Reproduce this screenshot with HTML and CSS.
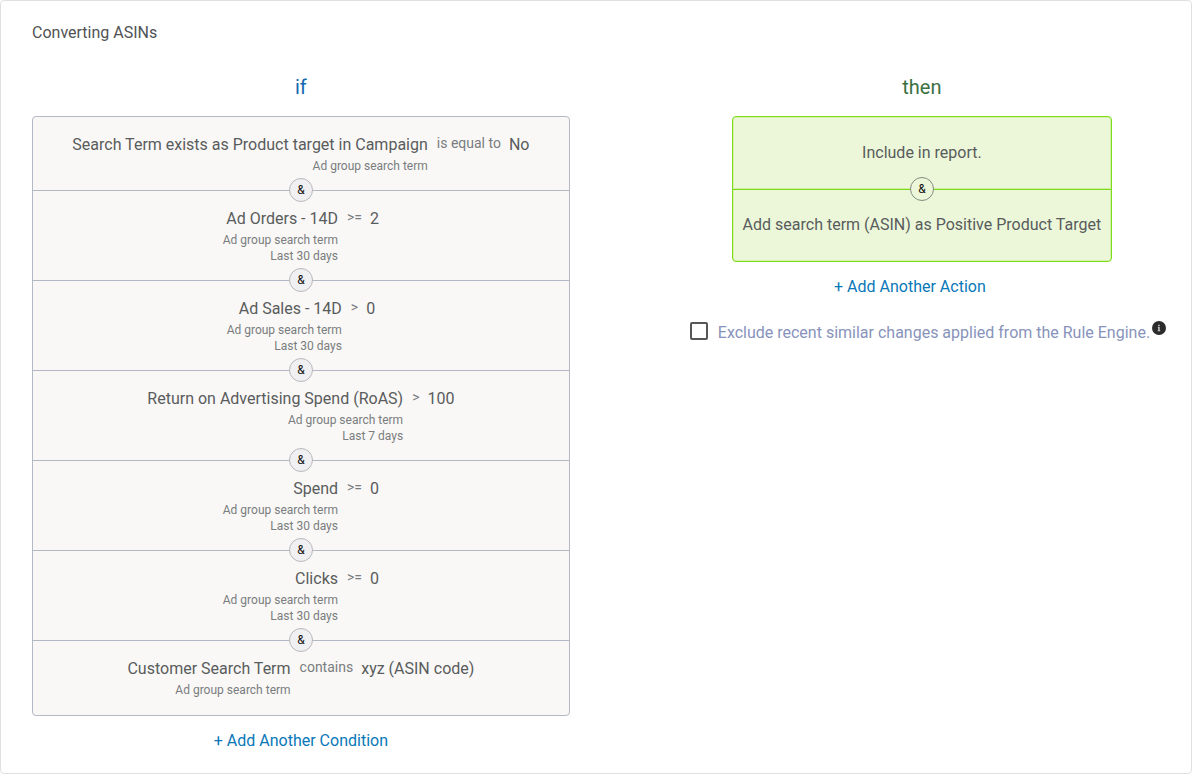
FILE: index.html
```html
<!DOCTYPE html>
<html lang="en">
<head>
<meta charset="utf-8">
<meta name="viewport" content="width=device-width, initial-scale=1">
<title>Converting ASINs</title>
<link rel="stylesheet" href="styles.css">
</head>
<body>
<main class="card">
  <h1 class="card-title">Converting ASINs</h1>
  <div class="columns">
    <section class="column">
      <h2 class="heading heading-if">if</h2>
      <ul class="box conditions">
        <li class="condition">
          <div class="subject"><span class="name">Search Term exists as Product target in Campaign</span><span class="meta">Ad group search term</span></div>
          <span class="operator">is equal to</span><span class="value">No</span>
          <span class="joiner">&amp;</span>
        </li>
        <li class="condition">
          <div class="subject"><span class="name">Ad Orders - 14D</span><span class="meta">Ad group search term</span><span class="meta">Last 30 days</span></div>
          <span class="operator">&gt;=</span><span class="value">2</span>
          <span class="joiner">&amp;</span>
        </li>
        <li class="condition">
          <div class="subject"><span class="name">Ad Sales - 14D</span><span class="meta">Ad group search term</span><span class="meta">Last 30 days</span></div>
          <span class="operator">&gt;</span><span class="value">0</span>
          <span class="joiner">&amp;</span>
        </li>
        <li class="condition">
          <div class="subject"><span class="name">Return on Advertising Spend (RoAS)</span><span class="meta">Ad group search term</span><span class="meta">Last 7 days</span></div>
          <span class="operator">&gt;</span><span class="value">100</span>
          <span class="joiner">&amp;</span>
        </li>
        <li class="condition">
          <div class="subject"><span class="name">Spend</span><span class="meta">Ad group search term</span><span class="meta">Last 30 days</span></div>
          <span class="operator">&gt;=</span><span class="value">0</span>
          <span class="joiner">&amp;</span>
        </li>
        <li class="condition">
          <div class="subject"><span class="name">Clicks</span><span class="meta">Ad group search term</span><span class="meta">Last 30 days</span></div>
          <span class="operator">&gt;=</span><span class="value">0</span>
          <span class="joiner">&amp;</span>
        </li>
        <li class="condition">
          <div class="subject"><span class="name">Customer Search Term</span><span class="meta">Ad group search term</span></div>
          <span class="operator">contains</span><span class="value">xyz (ASIN code)</span>
        </li>
      </ul>
      <button type="button" class="add">+ Add Another Condition</button>
    </section>
    <section class="column">
      <h2 class="heading heading-then">then</h2>
      <ul class="box actions">
        <li class="action">Include in report.<span class="joiner joiner-green">&amp;</span></li>
        <li class="action">Add search term (ASIN) as Positive Product Target</li>
      </ul>
      <button type="button" class="add add-action">+ Add Another Action</button>
      <div class="exclude">
        <input class="check" type="checkbox" id="exclude">
        <label class="exclude-label" for="exclude">Exclude recent similar changes applied from the Rule Engine.</label>
        <svg class="info" viewBox="0 0 14 14" aria-hidden="true"><circle cx="7" cy="7" r="7" fill="#2b2b2b"/><path d="M6.2 3.8h1.5v1.3H6.2zM5.8 5.8h1.9v3.6h.6v.9H5.6v-.9h.6V6.7h-.4z" fill="#ccc"/></svg>
      </div>
    </section>
  </div>
</main>
</body>
</html>
```
FILE: styles.css
```css
* {
  box-sizing: border-box;
}

body {
  margin: 0;
  background: #fff;
  color: #595c5c;
  font-family: Roboto, "Liberation Sans", sans-serif;
  font-size: 16px;
  line-height: 24px;
}

.card {
  min-height: 100vh;
  padding: 20px 29px 20px 31px;
  border: 1px solid #e0e0e0;
  border-radius: 4px;
}

.card-title {
  margin: 0 0 29px;
  color: #505254;
  font-size: 16px;
  font-weight: 400;
}

.columns {
  display: grid;
  grid-template-columns: minmax(0, 28fr) minmax(0, 25fr);
  column-gap: 112px;
  align-items: start;
}

.column {
  display: flex;
  flex-direction: column;
  align-items: center;
}

.heading {
  margin: 0 0 16px;
  font-size: 20px;
  font-weight: 400;
  line-height: 26px;
}

.heading-if {
  color: #1668b0;
}

.heading-then {
  color: #3b7042;
}

.box {
  margin: 0;
  padding: 0;
  border: 1px solid #b3b8c4;
  border-radius: 4px;
  list-style: none;
}

.conditions {
  width: 100%;
  background: #f9f8f7;
}

.condition {
  position: relative;
  display: flex;
  justify-content: center;
  padding: 16px 8px;
  border-bottom: 1px solid #b3b8c4;
}

.condition:last-child {
  padding-bottom: 17px;
  border-bottom: 0;
}

.subject {
  display: flex;
  flex-direction: column;
  align-items: flex-end;
}

.name {
  margin-bottom: 1px;
}

.meta {
  color: #7a7d7e;
  font-size: 12px;
  line-height: 16px;
}

.operator {
  margin: 0 8px 0 9px;
  color: #7a7d7e;
  font-size: 14px;
  line-height: 20px;
}

.joiner {
  position: absolute;
  bottom: -12px;
  left: calc(50% - 12px);
  width: 24px;
  height: 24px;
  border: 1px solid #b8b8ba;
  border-radius: 50%;
  background: #f0f0f2;
  color: #111;
  font-size: 12px;
  line-height: 22px;
  text-align: center;
}

.joiner-green {
  border-color: #838a80;
  background: #ecf7da;
}

.actions {
  border-color: #7ddc16;
  background: #ecf7da;
  box-shadow: inset 0 0 0 1px #d6f2b0;
}

.action {
  position: relative;
  padding: 24px 10px;
  text-align: center;
}

.action:first-child {
  border-bottom: 1px solid #7ddc16;
  box-shadow: inset 0 -1px #cdeea2;
}

.action:last-child {
  padding: 23px 10px 24px;
}

.add {
  margin-top: 13px;
  padding: 0;
  border: 0;
  background: none;
  color: #0a78b8;
  font: inherit;
  cursor: pointer;
}

.add-action {
  margin-right: 24px;
}

.exclude {
  display: flex;
  align-items: flex-start;
  align-self: stretch;
  margin-top: 22px;
  padding-left: 8px;
}

.check {
  flex: none;
  width: 18px;
  height: 18px;
  margin: 1px 10px 0 0;
  appearance: none;
  border: 2px solid #555759;
  border-radius: 2px;
  background: #fff;
}

.check:checked {
  background: #555759;
}

.exclude-label {
  color: #8893bb;
  white-space: nowrap;
}

.info {
  flex: none;
  width: 14px;
  height: 14px;
  margin-left: 2px;
}
```
